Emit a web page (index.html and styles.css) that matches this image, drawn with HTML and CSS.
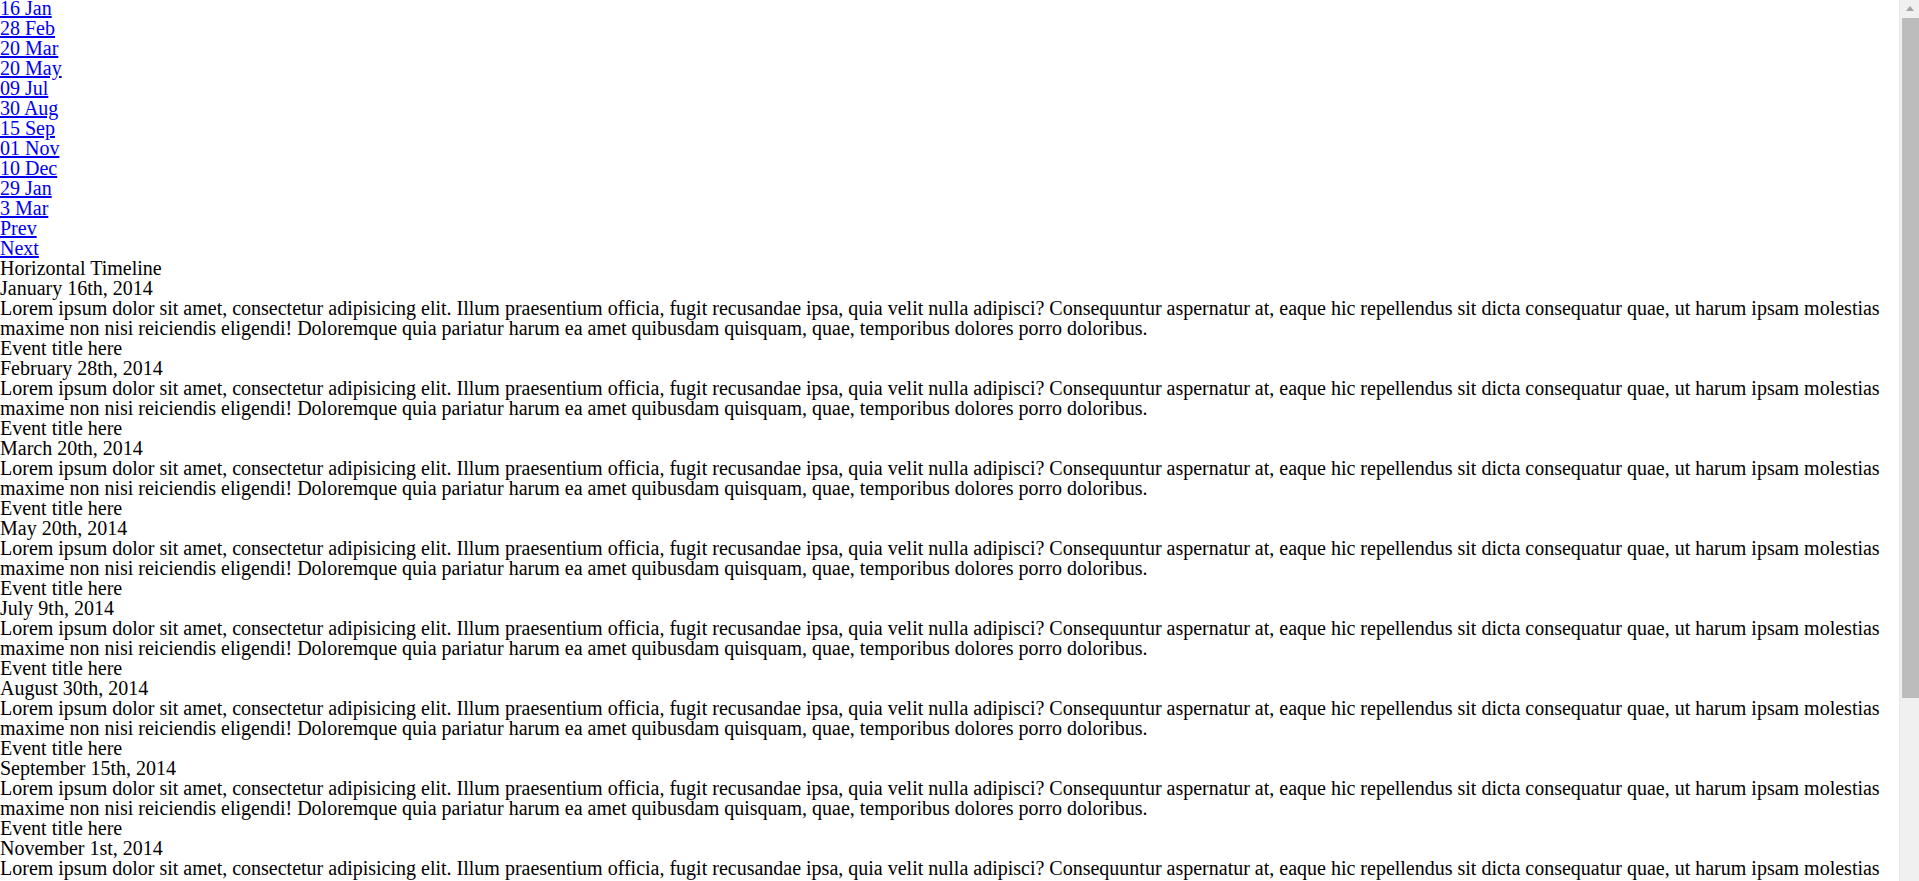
FILE: index.html
```html
<!DOCTYPE html>
<html>
<head>
<meta charset="utf-8">
<link rel="stylesheet" href="styles.css">
</head>
<body class="page">
<section class="timeline">
  <div class="timeline-nav">
    <ol class="dates">
      <li class="date-item"><a class="date-link" href="#0">16 Jan</a></li>
      <li class="date-item"><a class="date-link" href="#0">28 Feb</a></li>
      <li class="date-item"><a class="date-link" href="#0">20 Mar</a></li>
      <li class="date-item"><a class="date-link" href="#0">20 May</a></li>
      <li class="date-item"><a class="date-link" href="#0">09 Jul</a></li>
      <li class="date-item"><a class="date-link" href="#0">30 Aug</a></li>
      <li class="date-item"><a class="date-link" href="#0">15 Sep</a></li>
      <li class="date-item"><a class="date-link" href="#0">01 Nov</a></li>
      <li class="date-item"><a class="date-link" href="#0">10 Dec</a></li>
      <li class="date-item"><a class="date-link" href="#0">29 Jan</a></li>
      <li class="date-item"><a class="date-link" href="#0">3 Mar</a></li>
    </ol>
    <ul class="nav">
      <li class="date-item"><a class="date-link" href="#0">Prev</a></li>
      <li class="date-item"><a class="date-link" href="#0">Next</a></li>
    </ul>
  </div>
  <ol class="events">
    <li class="event"><div class="title">Horizontal Timeline</div><div class="when">January 16th, 2014</div><p class="text">Lorem ipsum dolor sit amet, consectetur adipisicing elit. Illum praesentium officia, fugit recusandae ipsa, quia velit nulla adipisci? Consequuntur aspernatur at, eaque hic repellendus sit dicta consequatur quae, ut harum ipsam molestias maxime non nisi reiciendis eligendi! Doloremque quia pariatur harum ea amet quibusdam quisquam, quae, temporibus dolores porro doloribus.</p></li>
    <li class="event"><div class="title">Event title here</div><div class="when">February 28th, 2014</div><p class="text">Lorem ipsum dolor sit amet, consectetur adipisicing elit. Illum praesentium officia, fugit recusandae ipsa, quia velit nulla adipisci? Consequuntur aspernatur at, eaque hic repellendus sit dicta consequatur quae, ut harum ipsam molestias maxime non nisi reiciendis eligendi! Doloremque quia pariatur harum ea amet quibusdam quisquam, quae, temporibus dolores porro doloribus.</p></li>
    <li class="event"><div class="title">Event title here</div><div class="when">March 20th, 2014</div><p class="text">Lorem ipsum dolor sit amet, consectetur adipisicing elit. Illum praesentium officia, fugit recusandae ipsa, quia velit nulla adipisci? Consequuntur aspernatur at, eaque hic repellendus sit dicta consequatur quae, ut harum ipsam molestias maxime non nisi reiciendis eligendi! Doloremque quia pariatur harum ea amet quibusdam quisquam, quae, temporibus dolores porro doloribus.</p></li>
    <li class="event"><div class="title">Event title here</div><div class="when">May 20th, 2014</div><p class="text">Lorem ipsum dolor sit amet, consectetur adipisicing elit. Illum praesentium officia, fugit recusandae ipsa, quia velit nulla adipisci? Consequuntur aspernatur at, eaque hic repellendus sit dicta consequatur quae, ut harum ipsam molestias maxime non nisi reiciendis eligendi! Doloremque quia pariatur harum ea amet quibusdam quisquam, quae, temporibus dolores porro doloribus.</p></li>
    <li class="event"><div class="title">Event title here</div><div class="when">July 9th, 2014</div><p class="text">Lorem ipsum dolor sit amet, consectetur adipisicing elit. Illum praesentium officia, fugit recusandae ipsa, quia velit nulla adipisci? Consequuntur aspernatur at, eaque hic repellendus sit dicta consequatur quae, ut harum ipsam molestias maxime non nisi reiciendis eligendi! Doloremque quia pariatur harum ea amet quibusdam quisquam, quae, temporibus dolores porro doloribus.</p></li>
    <li class="event"><div class="title">Event title here</div><div class="when">August 30th, 2014</div><p class="text">Lorem ipsum dolor sit amet, consectetur adipisicing elit. Illum praesentium officia, fugit recusandae ipsa, quia velit nulla adipisci? Consequuntur aspernatur at, eaque hic repellendus sit dicta consequatur quae, ut harum ipsam molestias maxime non nisi reiciendis eligendi! Doloremque quia pariatur harum ea amet quibusdam quisquam, quae, temporibus dolores porro doloribus.</p></li>
    <li class="event"><div class="title">Event title here</div><div class="when">September 15th, 2014</div><p class="text">Lorem ipsum dolor sit amet, consectetur adipisicing elit. Illum praesentium officia, fugit recusandae ipsa, quia velit nulla adipisci? Consequuntur aspernatur at, eaque hic repellendus sit dicta consequatur quae, ut harum ipsam molestias maxime non nisi reiciendis eligendi! Doloremque quia pariatur harum ea amet quibusdam quisquam, quae, temporibus dolores porro doloribus.</p></li>
    <li class="event"><div class="title">Event title here</div><div class="when">November 1st, 2014</div><p class="text">Lorem ipsum dolor sit amet, consectetur adipisicing elit. Illum praesentium officia, fugit recusandae ipsa, quia velit nulla adipisci? Consequuntur aspernatur at, eaque hic repellendus sit dicta consequatur quae, ut harum ipsam molestias maxime non nisi reiciendis eligendi! Doloremque quia pariatur harum ea amet quibusdam quisquam, quae, temporibus dolores porro doloribus.</p></li>
    <li class="event"><div class="title">Event title here</div><div class="when">December 10th, 2014</div><p class="text">Lorem ipsum dolor sit amet, consectetur adipisicing elit. Illum praesentium officia, fugit recusandae ipsa, quia velit nulla adipisci? Consequuntur aspernatur at, eaque hic repellendus sit dicta consequatur quae, ut harum ipsam molestias maxime non nisi reiciendis eligendi! Doloremque quia pariatur harum ea amet quibusdam quisquam, quae, temporibus dolores porro doloribus.</p></li>
    <li class="event"><div class="title">Event title here</div><div class="when">January 29th, 2015</div><p class="text">Lorem ipsum dolor sit amet, consectetur adipisicing elit. Illum praesentium officia, fugit recusandae ipsa, quia velit nulla adipisci? Consequuntur aspernatur at, eaque hic repellendus sit dicta consequatur quae, ut harum ipsam molestias maxime non nisi reiciendis eligendi! Doloremque quia pariatur harum ea amet quibusdam quisquam, quae, temporibus dolores porro doloribus.</p></li>
    <li class="event"><div class="title">Event title here</div><div class="when">March 3rd, 2015</div><p class="text">Lorem ipsum dolor sit amet, consectetur adipisicing elit. Illum praesentium officia, fugit recusandae ipsa, quia velit nulla adipisci? Consequuntur aspernatur at, eaque hic repellendus sit dicta consequatur quae, ut harum ipsam molestias maxime non nisi reiciendis eligendi! Doloremque quia pariatur harum ea amet quibusdam quisquam, quae, temporibus dolores porro doloribus.</p></li>
  </ol>
</section>
<div class="scrollbar" aria-hidden="true">
  <div class="scroll-up"></div>
  <div class="scroll-thumb"></div>
</div>
</body>
</html>
```

FILE: styles.css
```css
html, body { margin: 0; padding: 0; }
.page {
  font-family: "Liberation Serif", "Times New Roman", serif;
  font-size: 20px;
  line-height: 20px;
  color: #000;
  background: #fff;
}
.timeline { display: block; margin-top: -2px; margin-right: 20px; }
.timeline-nav { display: block; }
.dates, .nav, .events {
  list-style: none;
  margin: 0;
  padding: 0;
}
.date-item, .event { display: block; }
.date-link { color: #0000ee; text-decoration: underline; }
.title, .when { display: block; }
.text { margin: 0; }

.scrollbar {
  position: fixed;
  top: 0;
  right: 0;
  width: 19px;
  height: 100vh;
  background: #f0f0f0;
  border-left: 1px solid #e8e8e8;
  display: flex;
  flex-direction: column;
  align-items: center;
}
.scroll-up {
  margin-top: 6px;
  width: 0;
  height: 0;
  border-left: 4.5px solid transparent;
  border-right: 4.5px solid transparent;
  border-bottom: 5px solid #a3a3a3;
}
.scroll-thumb {
  margin-top: 7px;
  margin-left: 2px;
  width: 17px;
  height: 680px;
  background: #bcbcbc;
}
```
